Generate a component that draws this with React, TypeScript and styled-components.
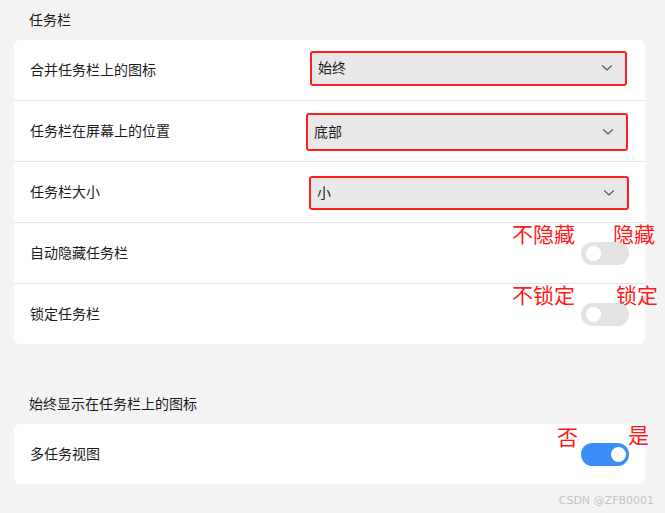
import React from 'react';
import styled, {createGlobalStyle} from "styled-components";

const GlobalStyle = createGlobalStyle`
  body {
    margin: 0;
    background: #f3f3f3;
    font-family: "Noto Sans CJK SC", "Noto Sans", sans-serif;
    color: #1b1b1b;
  }
`

type SelectRow = { label: string, value: string, w: number, h: number, mr: number, mt: number }
type ToggleRow = { label: string, on: boolean, off: string, yes: string, offLeft: number, yesLeft: number }

const selects: SelectRow[] = [
	{label: '合并任务栏上的图标', value: '始终', w: 317, h: 35, mr: 18, mt: -4},
	{label: '任务栏在屏幕上的位置', value: '底部', w: 322, h: 38, mr: 17, mt: 2},
	{label: '任务栏大小', value: '小', w: 320, h: 34, mr: 16, mt: 1},
]

const toggles: ToggleRow[] = [
	{label: '自动隐藏任务栏', on: false, off: '不隐藏', yes: '隐藏', offLeft: -69, yesLeft: 32},
	{label: '锁定任务栏', on: false, off: '不锁定', yes: '锁定', offLeft: -69, yesLeft: 35},
]

const Chevron = () => (
	<svg width="12" height="8" viewBox="0 0 12 8">
		<path d="M1.5 1.8 L6 6 L10.5 1.8" fill="none" stroke="#555" strokeWidth="1.2" strokeLinecap="round"/>
	</svg>
)

const App = () => {
	return (
		<Page>
			<GlobalStyle/>
			<SectionTitle>任务栏</SectionTitle>
			<Card>
				{selects.map(s => (
					<Row key={s.label}>
						<Label>{s.label}</Label>
						<Select $w={s.w} $h={s.h} $mr={s.mr} $mt={s.mt}>
							<span>{s.value}</span>
							<Chevron/>
						</Select>
					</Row>
				))}
				{toggles.map(t => (
					<Row key={t.label}>
						<Label>{t.label}</Label>
						<ToggleWrap>
							<Note $left={t.offLeft}>{t.off}</Note>
							<Note $left={t.yesLeft}>{t.yes}</Note>
							<Toggle $on={t.on}/>
						</ToggleWrap>
					</Row>
				))}
			</Card>

			<SectionTitle $spaced>始终显示在任务栏上的图标</SectionTitle>
			<Card>
				<Row>
					<Label>多任务视图</Label>
					<ToggleWrap>
						<Note $left={-24} $top={-17}>否</Note>
						<Note $left={47} $top={-19}>是</Note>
						<Toggle $on/>
					</ToggleWrap>
				</Row>
			</Card>
			<Watermark>CSDN @ZFB0001</Watermark>
		</Page>
	);
};

export default App;

const Page = styled.div`
  position: relative;
  height: 513px;
  box-sizing: border-box;
  padding: 0 20px 0 14px;
  overflow: hidden;
`
const SectionTitle = styled.div<{ $spaced?: boolean }>`
  height: 40px;
  line-height: 38px;
  padding-left: 15px;
  font-size: 14px;
  margin-top: ${p => p.$spaced ? '40px' : '0'};
`
const Card = styled.div`
  background: #ffffff;
  border-radius: 6px;
`
const Row = styled.div`
  display: flex;
  align-items: center;
  justify-content: space-between;
  height: 60px;
  padding: 0 16px;
  border-bottom: 1px solid #e3e3e3;

  &:last-child {
    border-bottom: none;
  }
`
const Label = styled.span`
  font-size: 14px;
  line-height: 20px;
  margin-top: -2px;
`
const Select = styled.div<{ $w: number, $h: number, $mr: number, $mt: number }>`
  display: flex;
  align-items: center;
  justify-content: space-between;
  box-sizing: border-box;
  width: ${p => p.$w}px;
  height: ${p => p.$h}px;
  margin-right: ${p => p.$mr - 16}px;
  margin-top: ${p => p.$mt}px;
  padding: 0 12px 0 6px;
  background: #e8e8e8;
  border: 2.5px solid #ff1f1f;
  border-radius: 3px;
  font-size: 14px;
  line-height: 20px;
  color: #1b1b1b;

  span {
    margin-top: -2px;
  }
`
const ToggleWrap = styled.div`
  position: relative;
`
const Toggle = styled.div<{ $on?: boolean }>`
  position: relative;
  width: 48px;
  height: 23px;
  border-radius: 12px;
  background: ${p => p.$on ? '#3a8ef6' : '#e3e3e3'};

  &::after {
    content: '';
    position: absolute;
    top: 4px;
    left: ${p => p.$on ? '30px' : '5px'};
    width: 15px;
    height: 15px;
    border-radius: 50%;
    background: #ffffff;
  }
`
const Note = styled.span<{ $left: number, $top?: number }>`
  position: absolute;
  left: ${p => p.$left}px;
  top: ${p => p.$top ?? -19}px;
  font-size: 21px;
  line-height: 1;
  color: #ff1a1a;
  white-space: nowrap;
`
const Watermark = styled.div`
  position: absolute;
  right: 11px;
  bottom: 6px;
  font-family: "DejaVu Sans", sans-serif;
  font-size: 11px;
  color: #c4c4c4;
`
